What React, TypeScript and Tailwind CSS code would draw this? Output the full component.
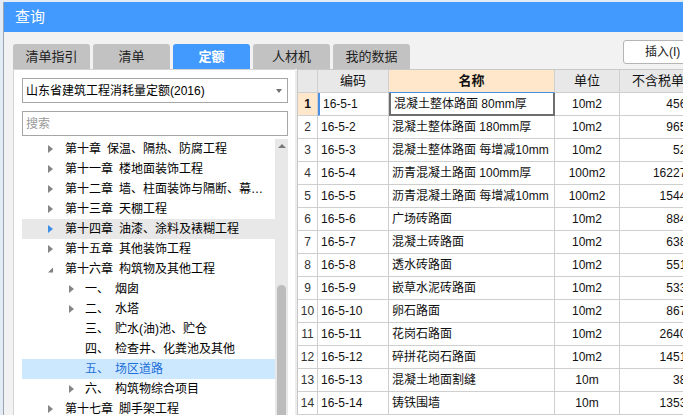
import React from "react";

type TreeRow = {
  level: 1 | 2;
  arrow: "right" | "down" | "none";
  head: string;
  name: string;
  state?: "hover" | "selected";
};

const tree: TreeRow[] = [
  { level: 1, arrow: "right", head: "第十章", name: "保温、隔热、防腐工程" },
  { level: 1, arrow: "right", head: "第十一章", name: "楼地面装饰工程" },
  { level: 1, arrow: "right", head: "第十二章", name: "墙、柱面装饰与隔断、幕…" },
  { level: 1, arrow: "right", head: "第十三章", name: "天棚工程" },
  { level: 1, arrow: "right", head: "第十四章", name: "油漆、涂料及裱糊工程", state: "hover" },
  { level: 1, arrow: "right", head: "第十五章", name: "其他装饰工程" },
  { level: 1, arrow: "down", head: "第十六章", name: "构筑物及其他工程" },
  { level: 2, arrow: "right", head: "一、", name: "烟囱" },
  { level: 2, arrow: "right", head: "二、", name: "水塔" },
  { level: 2, arrow: "none", head: "三、", name: "贮水(油)池、贮仓" },
  { level: 2, arrow: "none", head: "四、", name: "检查井、化粪池及其他" },
  { level: 2, arrow: "none", head: "五、", name: "场区道路", state: "selected" },
  { level: 2, arrow: "right", head: "六、", name: "构筑物综合项目" },
  { level: 1, arrow: "right", head: "第十七章", name: "脚手架工程" },
];

const rows = [
  ["16-5-1", "混凝土整体路面 80mm厚", "10m2", "456.95"],
  ["16-5-2", "混凝土整体路面 180mm厚", "10m2", "965.43"],
  ["16-5-3", "混凝土整体路面 每增减10mm", "10m2", "52.21"],
  ["16-5-4", "沥青混凝土路面 100mm厚", "100m2", "16227.60"],
  ["16-5-5", "沥青混凝土路面 每增减10mm", "100m2", "1544.04"],
  ["16-5-6", "广场砖路面", "10m2", "884.52"],
  ["16-5-7", "混凝土砖路面", "10m2", "638.07"],
  ["16-5-8", "透水砖路面", "10m2", "551.70"],
  ["16-5-9", "嵌草水泥砖路面", "10m2", "533.18"],
  ["16-5-10", "卵石路面", "10m2", "867.33"],
  ["16-5-11", "花岗石路面", "10m2", "2640.92"],
  ["16-5-12", "碎拼花岗石路面", "10m2", "1451.86"],
  ["16-5-13", "混凝土地面割缝", "10m", "38.64"],
  ["16-5-14", "铸铁围墙", "10m", "1353.44"],
];

const tabs = ["清单指引", "清单", "定额", "人材机", "我的数据"];

function Arrow({ kind, blue }: { kind: TreeRow["arrow"]; blue?: boolean }) {
  if (kind === "none") return <span className="w-[5px]" />;
  if (kind === "down")
    return (
      <svg width="6" height="6" viewBox="0 0 6 6" className="mt-[2px]">
        <polygon points="6,0 6,6 0,6" fill="#808080" />
      </svg>
    );
  return (
    <span
      className={
        "w-0 h-0 border-y-[4px] border-y-transparent border-l-[5px] " +
        (blue ? "border-l-[#3d8ee8]" : "border-l-[#858585]")
      }
    />
  );
}

function TreeItem({ row }: { row: TreeRow }) {
  const bg =
    row.state === "hover" ? "bg-[#e8e8e8]" : row.state === "selected" ? "bg-[#cce8ff]" : "";
  const color = row.state === "selected" ? "text-[#1e6fd9]" : "text-black";
  return (
    <div className={"h-[20px] flex items-center whitespace-nowrap " + bg + " " + color}>
      <div className={"flex items-center justify-center w-[5px] " + (row.level === 1 ? "ml-[26px]" : "ml-[47px]")}>
        <Arrow kind={row.arrow} blue={row.state === "hover"} />
      </div>
      <span className={row.level === 1 ? "ml-[12px]" : "ml-[11px]"}>{row.head}</span>
      <span className="ml-[6px]">{row.name}</span>
    </div>
  );
}

export default function App() {
  return (
    <div className="w-[683px] h-[415px] overflow-hidden bg-[#e3ebf5] pl-[3px] pt-[2px] text-[12px] font-['Liberation_Sans','Noto_Sans_CJK_SC',sans-serif]">
      <div className="w-[760px] h-full flex flex-col border-l border-[#9aa6b4]">
        {/* title bar */}
        <div className="h-[30px] shrink-0 bg-[#4299fe] flex items-center pl-[11px] text-white text-[15px]">
          查询
        </div>

        <div className="flex-1 min-h-0 bg-[#f2f2f2] pl-[9px] flex flex-col">
          {/* tabs + insert button */}
          <div className="h-[37px] shrink-0 flex items-end">
            <div className="flex gap-[3px]">
              {tabs.map((t) => (
                <div
                  key={t}
                  className={
                    "w-[77px] h-[25px] rounded-t-[3px] flex items-center justify-center text-[13px] " +
                    (t === "定额" ? "bg-[#4299fe] text-white font-bold" : "bg-[#c2c2c2] text-[#222]")
                  }
                >
                  {t}
                </div>
              ))}
            </div>
            <div className="self-start mt-[8px] ml-[213px] w-[80px] h-[24px] bg-white border border-[#b5b5b5] rounded-[3px] flex items-center pl-[21px] text-[12px] text-[#222]">
              插入(I)
            </div>
          </div>

          {/* content */}
          <div className="flex-1 min-h-0 flex">
            {/* left tree panel */}
            <div className="w-[282px] shrink-0 bg-white border-l border-t border-[#d4d4d4] pl-[8px] flex flex-col">
              <div className="mt-[8px] w-[266px] h-[25px] border border-[#a6a6a6] flex items-center pl-[3px] pr-[5px] text-black">
                <span className="flex-1">山东省建筑工程消耗量定额(2016)</span>
                <span className="w-0 h-0 border-x-[3px] border-x-transparent border-t-[4px] border-t-[#707070]" />
              </div>
              <div className="mt-[8px] w-[266px] h-[25px] border border-[#a6a6a6] flex items-center pl-[3px] text-[#9a9a9a]">
                搜索
              </div>
              <div className="mt-[3px] w-[266px] flex-1 min-h-0 flex">
                <div className="w-[253px]">
                  {tree.map((r, i) => (
                    <TreeItem key={i} row={r} />
                  ))}
                </div>
                <div className="w-[13px] bg-[#e8e8e8] flex flex-col items-center">
                  <span className="mt-[5px] w-0 h-0 border-x-[4px] border-x-transparent border-b-[4px] border-b-[#7a7a7a]" />
                  <div className="mt-[137px] w-[9px] flex-1 bg-[#bcbcbc] rounded-t-[5px]" />
                </div>
              </div>
            </div>

            {/* separator */}
            <div className="w-[2px] shrink-0 bg-[#ededed]" />

            {/* table */}
            <div className="flex-1 min-w-0 bg-white border-t border-l border-[#c8c8c8]">
              <div className="grid grid-cols-[20px_71px_166px_65px_90px] text-[#111]">
                <div className="h-[23px] bg-[#e8e8e8] border-r border-b border-[#cfcfcf]" />
                <div className="h-[23px] bg-[#e8e8e8] border-r border-b border-[#cfcfcf] flex items-center justify-center text-[13px]">
                  编码
                </div>
                <div className="h-[23px] bg-[#ffe7cc] border-r border-b border-b-[#4a90e2] border-r-[#cfcfcf] flex items-center justify-center font-bold text-[13px]">
                  名称
                </div>
                <div className="h-[23px] bg-[#e8e8e8] border-r border-b border-[#cfcfcf] flex items-center justify-center text-[13px]">
                  单位
                </div>
                <div className="h-[23px] bg-[#e8e8e8] border-b border-[#cfcfcf] flex items-center pl-[12px] text-[13px] whitespace-nowrap">
                  不含税单价
                </div>

                {rows.map((r, i) => {
                  const first = i === 0;
                  return (
                    <React.Fragment key={r[0]}>
                      <div
                        className={
                          "h-[23px] border-r border-b border-[#cfcfcf] flex items-center justify-center " +
                          (first ? "bg-[#ffe7cc] font-bold" : "text-[#333]")
                        }
                      >
                        {i + 1}
                      </div>
                      <div
                        className={
                          "h-[23px] border-r border-b border-[#cfcfcf] flex items-center pl-[3px] " +
                          (first ? "border-l-2 border-l-[#4a90e2] pl-[1px]" : "")
                        }
                      >
                        {r[0]}
                      </div>
                      <div
                        className={
                          "h-[23px] border-r border-b flex items-center pl-[3px] whitespace-nowrap " +
                          (first ? "border-l-2 border-l-[#6e6e6e] border-r-2 border-r-[#6e6e6e] border-b-2 border-b-[#6e6e6e] pl-[1px]" : "border-[#cfcfcf]")
                        }
                      >
                        {r[1]}
                      </div>
                      <div className="h-[23px] border-r border-b border-[#cfcfcf] flex items-center justify-center">
                        {r[2]}
                      </div>
                      <div className="h-[23px] border-b border-[#cfcfcf] flex items-center justify-end pr-[7px]">
                        {r[3]}
                      </div>
                    </React.Fragment>
                  );
                })}
              </div>
            </div>
          </div>
        </div>
      </div>
    </div>
  );
}
